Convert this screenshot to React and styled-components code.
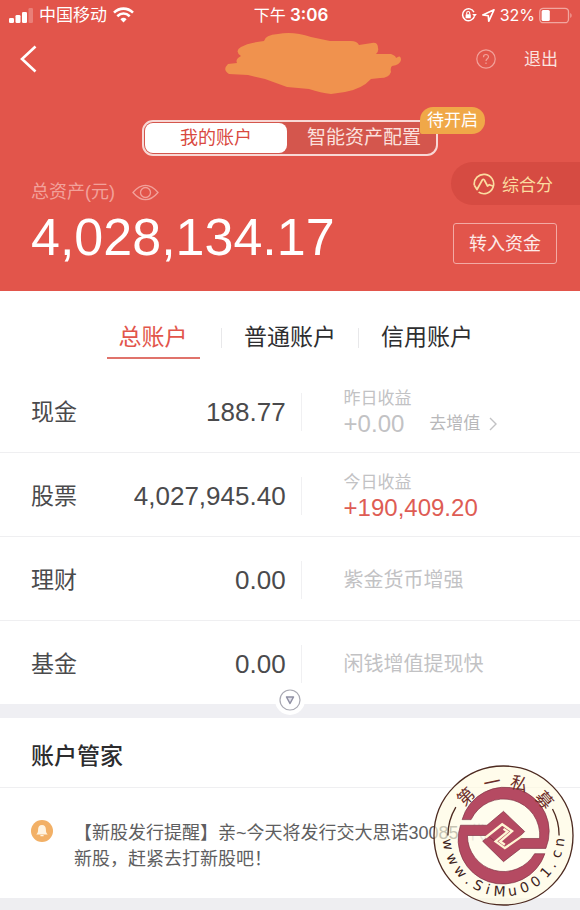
import React, { useState } from "react";
import styled, { createGlobalStyle } from "styled-components";

const GlobalStyle = createGlobalStyle`
  * { box-sizing: border-box; }
  body {
    margin: 0;
    background: #efeff2;
    font-family: "Liberation Sans", "Noto Sans CJK SC", sans-serif;
    color: #4a4a4c;
  }
  button {
    margin: 0;
    padding: 0;
    border: 0;
    background: none;
    font: inherit;
    color: inherit;
    cursor: pointer;
  }
  h2, p, dl, dd, dt { margin: 0; }
  svg { display: block; flex: none; }
`;

const Page = styled.main`
  position: relative;
  background: #fff;
`;

const Header = styled.header`
  background: #e2554b;
  color: #fff;
  padding-bottom: 27px;
`;

const StatusBar = styled.div`
  display: grid;
  grid-template-columns: 1fr auto 1fr;
  align-items: center;
  height: 30px;
  padding: 0 7px 0 9px;
  font-size: 17px;
  line-height: 20px;
`;

const StatusGroup = styled.div`
  display: flex;
  align-items: center;
  justify-content: ${(p) => (p.$end ? "flex-end" : "flex-start")};
  gap: ${(p) => (p.$end ? 4 : 6)}px;
  font-family: Inter, "Noto Sans CJK SC", sans-serif;
  font-size: ${(p) => (p.$end ? 16 : 17)}px;
`;

const Clock = styled.div`
  font: 600 17px/20px Inter, "Noto Sans CJK SC", sans-serif;
  span { font-weight: 400; font-size: 16px; }
`;

const NavBar = styled.nav`
  position: relative;
  display: flex;
  align-items: center;
  height: 58px;
  padding: 0 22px 0 20px;
`;

const BackButton = styled.button`
  margin-right: auto;
`;

const Scribble = styled.svg`
  position: absolute;
  left: calc(50% - 67px);
  top: 2px;
`;

const LogoutButton = styled.button`
  margin-left: 28px;
  padding-top: 2px;
  font-size: 17px;
  line-height: 24px;
  color: #fbe3e0;
`;

const SwitchRow = styled.div`
  display: flex;
  justify-content: center;
  padding: 32px 0 6px;
`;

const Segmented = styled.div`
  position: relative;
  display: flex;
  width: 296px;
  height: 36px;
  padding: 1px;
  border: 2px solid #f8d8d5;
  border-radius: 11px;
  background: #d4564d;
`;

const Segment = styled.button`
  flex: ${(p) => (p.$active ? "0 0 142px" : "1")};
  padding-left: ${(p) => (p.$active ? 0 : 6)}px;
  border-radius: 8px;
  background: ${(p) => (p.$active ? "#fff" : "transparent")};
  color: ${(p) => (p.$active ? "#d9493f" : "#fbe0dd")};
  font-size: ${(p) => (p.$active ? 18 : 19)}px;
  line-height: 30px;
  white-space: nowrap;
`;

const Badge = styled.span`
  position: absolute;
  right: -49px;
  top: -15px;
  padding: 0 7px;
  border-radius: 13px 13px 13px 2px;
  background: #f0a848;
  color: #fff;
  font-size: 17px;
  line-height: 27px;
`;

const Summary = styled.section`
  display: flex;
  justify-content: space-between;
  padding-left: 31px;
`;

const AssetLabel = styled.div`
  display: flex;
  align-items: center;
  gap: 17px;
  padding-top: 18px;
  font-size: 18px;
  line-height: 24px;
  color: #f2a19a;
`;

const AssetValue = styled.div`
  margin-top: 7px;
  font-size: 52px;
  line-height: 52px;
`;

const SummaryActions = styled.div`
  display: flex;
  flex-direction: column;
  align-items: flex-end;
  gap: 18px;
`;

const ScoreButton = styled.button`
  display: flex;
  align-items: center;
  gap: 7px;
  width: 129px;
  height: 43px;
  padding-left: 22px;
  border-radius: 22px 0 0 22px;
  background: #d64b42;
  color: #fbdca0;
  font-size: 17px;
`;

const TransferButton = styled.button`
  width: 104px;
  height: 41px;
  margin-right: 23px;
  border: 1px solid #f3aaa4;
  border-radius: 3px;
  color: #fdeae8;
  font-size: 18px;
  line-height: 38px;
`;

const Tabs = styled.div`
  display: flex;
  justify-content: center;
  height: 78px;
  padding-top: 25px;
`;

const Tab = styled.button`
  display: flex;
  justify-content: center;
  width: 137px;
  height: 44px;
  font-size: 23px;
  line-height: 42px;
  color: ${(p) => (p.$active ? "#e2554b" : "#2e2e30")};
  background: linear-gradient(#e8e8ea, #e8e8ea) right 12px / 1px 20px no-repeat;
  &:last-child { background: none; }
  span {
    width: 93px;
    height: 43px;
    border-bottom: ${(p) => (p.$active ? "2px solid #e0736b" : "0")};
  }
`;

const Holdings = styled.dl`
  position: relative;
  border-bottom: 14px solid #efeff3;
`;

const Row = styled.div`
  display: flex;
  align-items: center;
  height: 84px;
  padding-top: 2px;
  border-bottom: 1px solid #efeff1;
  &:last-of-type {
    height: 83px;
    border-bottom: 0;
  }
`;

const RowMain = styled.div`
  flex: 0 0 52%;
  display: flex;
  align-items: center;
  justify-content: space-between;
  height: 38px;
  padding: 0 15px 0 31px;
  border-right: 1px solid #f0f0f2;
`;

const RowName = styled.dt`
  font-size: 23px;
  line-height: 36px;
`;

const RowAmount = styled.dd`
  font-size: 26px;
  line-height: 36px;
`;

const RowDetail = styled.dd`
  flex: 1;
  padding-left: 42px;
  font-size: 20px;
  line-height: 26px;
  color: #c2c2c4;
`;

const DetailLabel = styled.div`
  font-size: 17px;
  line-height: 25px;
`;

const DetailValue = styled.div`
  display: flex;
  align-items: center;
  font-size: 24px;
  line-height: 26px;
  color: ${(p) => (p.$gain ? "#de5c54" : "#c2c2c4")};
`;

const GrowLink = styled.a`
  display: flex;
  align-items: center;
  gap: 9px;
  margin-left: 25px;
  font-size: 17px;
  color: #b8b8ba;
  text-decoration: none;
`;

const ExpandButton = styled.button`
  position: absolute;
  left: calc(50% - 15px);
  bottom: -11px;
  display: grid;
  place-items: center;
  width: 30px;
  height: 30px;
  border-radius: 50%;
  background: #fff;
`;

const SectionTitle = styled.h2`
  padding: 22px 31px 15px;
  border-bottom: 1px solid #efeff1;
  font-size: 23px;
  font-weight: 500;
  line-height: 32px;
  color: #2c2c2e;
`;

const Notice = styled.div`
  display: flex;
  gap: 21px;
  padding: 32px 31px 26px;
`;

const NoticeText = styled.p`
  font-size: 18px;
  line-height: 26px;
  color: #5e5e60;
  white-space: pre-line;
`;

const Footer = styled.footer`
  height: 13px;
  background: #eeeef1;
`;

const Seal = styled.svg`
  position: absolute;
  right: 6px;
  bottom: 5px;
`;

const SignalIcon = () => (
  <svg width="24" height="15" viewBox="0 0 24 15" fill="#fff">
    <rect x="0" y="10" width="5" height="5" rx="1.3" />
    <rect x="6.500" y="7" width="5" height="8" rx="1.3" />
    <rect x="13" y="4" width="5" height="11" rx="1.3" />
    <rect x="19.500" y="0" width="4.500" height="15" rx="1.3" opacity=".25" />
  </svg>
);

const WifiIcon = () => (
  <svg width="21" height="16" viewBox="0 0 21 16" fill="none" stroke="#fff" strokeWidth="2.600">
    <path d="M1 5.600C6.500.3 14.500.3 20 5.600" />
    <path d="M4.300 9.200c3.700-3.400 8.700-3.400 12.400 0" />
    <path d="M7.400 12.200a4.700 4.700 0 0 1 6.200 0l-3.100 3.300z" fill="#fff" stroke="none" />
  </svg>
);

const RotationLockIcon = () => (
  <svg width="16" height="16" viewBox="0 0 16 16" fill="none" stroke="#fff" strokeWidth="1.500">
    <path d="M13.300 9.500A6 6 0 1 1 13 5.200" />
    <path d="M11.200 7h4.600l-2.200 2.900z" fill="#fff" stroke="none" />
    <rect x="4.600" y="7.300" width="5.200" height="4" rx=".6" fill="#fff" stroke="none" />
    <path d="M5.700 7.500V6a1.500 1.500 0 0 1 3 0v1.500" strokeWidth="1.100" />
  </svg>
);

const LocationIcon = () => (
  <svg width="15" height="15" viewBox="0 0 15 15" fill="none" stroke="#fff" strokeWidth="1.600" strokeLinejoin="round">
    <path d="M13 1.800 1.800 6.900l5.500.8.400 5.600z" />
  </svg>
);

const BatteryIcon = () => (
  <svg width="34" height="17" viewBox="0 0 34 17">
    <rect x=".8" y="1.300" width="28.700" height="14.400" rx="3.500" fill="none" stroke="#f1a69f" strokeWidth="1.300" />
    <rect x="2.600" y="3" width="8.200" height="11" rx="1.500" fill="#fff" />
    <path d="M31.300 6v5c1.700-.7 1.700-4.300 0-5z" fill="#f1a69f" />
  </svg>
);

const BackIcon = () => (
  <svg width="17" height="28" viewBox="0 0 17 28" fill="none" stroke="#fff" strokeWidth="2.600">
    <path d="M15.500 1.500 2 14l13.500 12.500" />
  </svg>
);

const HelpIcon = () => (
  <svg width="20" height="20" viewBox="0 0 20 20" fill="none" stroke="#f2a19a" strokeWidth="1.200">
    <circle cx="10" cy="10" r="9.200" />
    <path d="M7.500 8.200c0-3.600 5-3.400 5-.4 0 1.900-2.500 2.100-2.500 4.200" />
    <path d="M10 13.400v1.500" />
  </svg>
);

const EyeIcon = () => (
  <svg width="27" height="17" viewBox="0 0 27 17" fill="none" stroke="#f2a19a" strokeWidth="1.300">
    <path d="M1 8.500C9-1 18-1 26 8.500 18 18 9 18 1 8.500z" />
    <circle cx="13.500" cy="8.500" r="5" />
  </svg>
);

const ScoreIcon = () => (
  <svg width="22" height="22" viewBox="0 0 22 22" fill="none" stroke="#fbdca0" strokeWidth="1.700" strokeLinejoin="round">
    <path d="M5.600 19.100A9.700 9.700 0 1 0 1.300 12.200" />
    <path d="M1.300 12.200 4 16.500 9.300 7q1-1.500 2 0l3.200 6 1.800-1.300 4.200 1.500" />
  </svg>
);

const ChevronIcon = () => (
  <svg width="8" height="14" viewBox="0 0 8 14" fill="none" stroke="#c2c2c4" strokeWidth="1.400">
    <path d="m1 1 6 6-6 6" />
  </svg>
);

const ExpandIcon = () => (
  <svg width="22" height="22" viewBox="0 0 22 22" fill="none" stroke="#a9a9b3" strokeWidth="1.200">
    <circle cx="11" cy="11" r="10" />
    <path d="M7.500 8h7L11 14.500z" stroke="#8f8fa3" strokeWidth="1.500" strokeLinejoin="round" fill="#e4e4ec" />
  </svg>
);

const BellIcon = () => (
  <svg width="22" height="22" viewBox="0 0 22 22">
    <circle cx="11" cy="11" r="11" fill="#f2b066" />
    <path d="M11 5c-2.700 0-3.900 2-3.900 4.500 0 2.800-.5 3.700-1.800 5h11.400c-1.300-1.300-1.800-2.200-1.800-5C14.900 7 13.700 5 11 5z" fill="#fff4e2" />
    <rect x="9.300" y="15" width="3.400" height="1.300" rx=".6" fill="#fff4e2" />
  </svg>
);

const sealTitle = [["第", -44], ["一", -12], ["私", 17], ["募", 49]];
const sealUrl = [
  ["w", 81], ["w", 65], ["w", 50], [".", 38], ["S", 27], ["i", 16], ["M", 4],
  ["u", -9], ["0", -22], ["0", -35], ["1", -49], [".", -59], ["c", -71], ["n", -83],
];

const SealMark = () => (
  <Seal width="141" height="141" viewBox="-213 -213 426 426" role="img" aria-label="第一私募 www.SiMu001.cn">
    <circle r="210" fill="#fffbe0" fillOpacity=".65" stroke="#4d2a20" strokeWidth="4" />
    <circle r="134" fill="#fffdf0" fillOpacity=".6" />
    <path d="M-168 0A168 168 0 0 1-144-86M168 0A168 168 0 0 0 148-80" fill="none" stroke="#4d2a20" strokeWidth="4" />
    <g stroke="#7d3043" strokeWidth="2" fill="#b54a62">
      <path d="M-125-48A134 134 0 1 1 128 39H52L0 79-63 17-46 4 0-34 54 9H109A109 109 0 0 0-98-48z" />
      <path d="M125 55A134 134 0 1 1-130-31H-50L0-73 64-12 48 4 0 38-48 0H-109A109 109 0 0 0 94 55z" />
    </g>
    <path d="M-54 6-4-34 26-13-10 18 4 28" fill="none" stroke="#fff6d4" strokeWidth="7" />
    <path d="M56 2 4 38-24 18 12-12 0-20" fill="none" stroke="#fff6d4" strokeWidth="7" />
    <g fill="#6b2c28" textAnchor="middle" fontFamily="'Noto Sans CJK SC', sans-serif" fontSize="52">
      {sealTitle.map(([c, a]) => (
        <text key={c} y="-145" transform={`rotate(${a})`}>{c}</text>
      ))}
    </g>
    <g fill="#3d2320" textAnchor="middle" fontFamily="'DejaVu Sans', sans-serif" fontSize="42">
      {sealUrl.map(([c, a]) => (
        <text key={a} y="184" transform={`rotate(${a})`}>{c}</text>
      ))}
    </g>
  </Seal>
);

const tabs = ["总账户", "普通账户", "信用账户"];

const holdings = [
  { name: "现金", amount: "188.77", label: "昨日收益", value: "+0.00", link: "去增值" },
  { name: "股票", amount: "4,027,945.40", label: "今日收益", value: "+190,409.20", gain: true },
  { name: "理财", amount: "0.00", text: "紫金货币增强" },
  { name: "基金", amount: "0.00", text: "闲钱增值提现快" },
];

export default function App() {
  const [tab, setTab] = useState(0);
  return (
    <Page>
      <GlobalStyle />
      <Header>
        <StatusBar>
          <StatusGroup>
            <SignalIcon />
            <span>中国移动</span>
            <WifiIcon />
          </StatusGroup>
          <Clock><span>下午</span> 3:06</Clock>
          <StatusGroup $end>
            <RotationLockIcon />
            <LocationIcon />
            <span>32%</span>
            <BatteryIcon />
          </StatusGroup>
        </StatusBar>
        <NavBar>
          <BackButton aria-label="返回"><BackIcon /></BackButton>
          <Scribble width="180" height="64" viewBox="0 0 180 64" fill="#f0924e" aria-hidden="true">
            <path d="M5 32 14 31Q12 27 18 24 11 19 18 15 25 11 41 9 42 3 55 2 70-1 88 5L107 9 128 9Q134 9 136 13L149 11Q155 10 155 16 156 19 153 22L168 22Q173 24 173 26 178 22 178 28 177 33 169 34 167 36 168 40 166 46 157 46L148 47Q139 57 122 60L108 62Q98 61 86 57L64 55 42 47 25 43 6 42Q-1 38 5 32z" />
          </Scribble>
          <button aria-label="帮助"><HelpIcon /></button>
          <LogoutButton>退出</LogoutButton>
        </NavBar>
        <SwitchRow>
          <Segmented>
            <Segment $active>我的账户</Segment>
            <Segment>智能资产配置</Segment>
            <Badge>待开启</Badge>
          </Segmented>
        </SwitchRow>
        <Summary>
          <div>
            <AssetLabel>
              <span>总资产(元)</span>
              <button aria-label="显示或隐藏金额"><EyeIcon /></button>
            </AssetLabel>
            <AssetValue>4,028,134.17</AssetValue>
          </div>
          <SummaryActions>
            <ScoreButton><ScoreIcon />综合分</ScoreButton>
            <TransferButton>转入资金</TransferButton>
          </SummaryActions>
        </Summary>
      </Header>

      <Tabs role="tablist">
        {tabs.map((t, i) => (
          <Tab key={t} role="tab" aria-selected={i === tab} $active={i === tab} onClick={() => setTab(i)}>
            <span>{t}</span>
          </Tab>
        ))}
      </Tabs>

      <Holdings>
        {holdings.map((h) => (
          <Row key={h.name}>
            <RowMain>
              <RowName>{h.name}</RowName>
              <RowAmount>{h.amount}</RowAmount>
            </RowMain>
            <RowDetail>
              {h.text}
              {h.label && <DetailLabel>{h.label}</DetailLabel>}
              {h.value && (
                <DetailValue $gain={h.gain}>
                  {h.value}
                  {h.link && <GrowLink href="#grow">{h.link}<ChevronIcon /></GrowLink>}
                </DetailValue>
              )}
            </RowDetail>
          </Row>
        ))}
        <ExpandButton aria-label="展开"><ExpandIcon /></ExpandButton>
      </Holdings>

      <SectionTitle>账户管家</SectionTitle>
      <Notice>
        <BellIcon />
        <NoticeText>{"【新股发行提醒】亲~今天将发行交大思诺300851代\n新股，赶紧去打新股吧！"}</NoticeText>
      </Notice>
      <Footer />
      <SealMark />
    </Page>
  );
}
